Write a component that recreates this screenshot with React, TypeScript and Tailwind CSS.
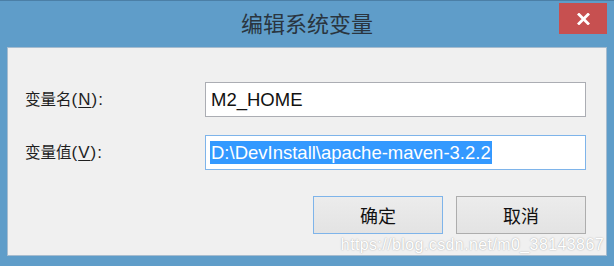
import React from 'react';

const cjk = '"Noto Sans CJK SC", "Liberation Sans", sans-serif';
const latin = '"Liberation Sans", "Noto Sans CJK SC", sans-serif';

function CloseIcon() {
  return (
    <svg width="13" height="12" viewBox="0 0 13 12" fill="none">
      <path d="M2 1.5 L11 10.5 M11 1.5 L2 10.5" stroke="#ffffff" strokeWidth="2.8" strokeLinecap="square" />
    </svg>
  );
}

function Label({ text, hotkey }: { text: string; hotkey: string }) {
  return (
    <label className="w-[180px] shrink-0 text-[15.5px] text-[#1e1e1e]" style={{ fontFamily: cjk }}>
      {text}
      <span className="text-[17px] tracking-[1px]" style={{ fontFamily: latin }}>
        (<span className="underline underline-offset-2">{hotkey}</span>):
      </span>
    </label>
  );
}

export default function App() {
  return (
    <div className="flex h-[266px] w-[614px] flex-col overflow-hidden border-t border-[#4b7fa6] bg-[#5f9dc9]">
      {/* Title bar */}
      <div className="relative flex h-[46px] shrink-0 items-center justify-center">
        <span className="pb-[4px] text-[22px] text-[#2a3540]" style={{ fontFamily: cjk }}>
          编辑系统变量
        </span>
        <button className="absolute right-[7px] top-[2px] flex h-[31px] w-[48px] items-center justify-center bg-[#c75050]">
          <CloseIcon />
        </button>
      </div>

      {/* Content panel */}
      <div className="relative mx-[7px] flex h-[209px] flex-col border border-[#a6bccf] bg-[#f0f0f0] pl-[17px] pr-[20px] pt-[34px]">
        <div className="flex items-center">
          <Label text="变量名" hotkey="N" />
          <div className="flex h-[35px] flex-1 items-center border border-[#abadb3] bg-white pl-[5px]">
            <span className="text-[18.5px] text-[#111]" style={{ fontFamily: latin }}>
              M2_HOME
            </span>
          </div>
        </div>

        <div className="mt-[18px] flex items-center">
          <Label text="变量值" hotkey="V" />
          <div className="flex h-[35px] flex-1 items-center border border-[#7eb4ea] bg-white pl-[4px]">
            <span
              className="bg-[#3399ff] px-[1px] text-[18.5px] leading-[23px] text-white"
              style={{ fontFamily: latin }}
            >
              D:\DevInstall\apache-maven-3.2.2
            </span>
          </div>
        </div>

        <div className="mt-[26px] flex justify-end gap-[13px]">
          <button
            className="h-[38px] w-[130px] border border-[#7eb4ea] bg-gradient-to-b from-[#ececec] to-[#e3e3e3] text-[18px] text-[#111]"
            style={{ fontFamily: cjk }}
          >
            确定
          </button>
          <button
            className="h-[38px] w-[130px] border border-[#adadad] bg-gradient-to-b from-[#ececec] to-[#e3e3e3] text-[18px] text-[#111]"
            style={{ fontFamily: cjk }}
          >
            取消
          </button>
        </div>

        {/* Watermark */}
        <span
          className="absolute bottom-[0px] right-[2px] text-[16px] leading-[20px] tracking-[0.4px] text-white [text-shadow:0_0_1.5px_#9a9a9a]"
          style={{ fontFamily: latin }}
        >
          https://blog.csdn.net/m0_38143867
        </span>
      </div>
    </div>
  );
}
